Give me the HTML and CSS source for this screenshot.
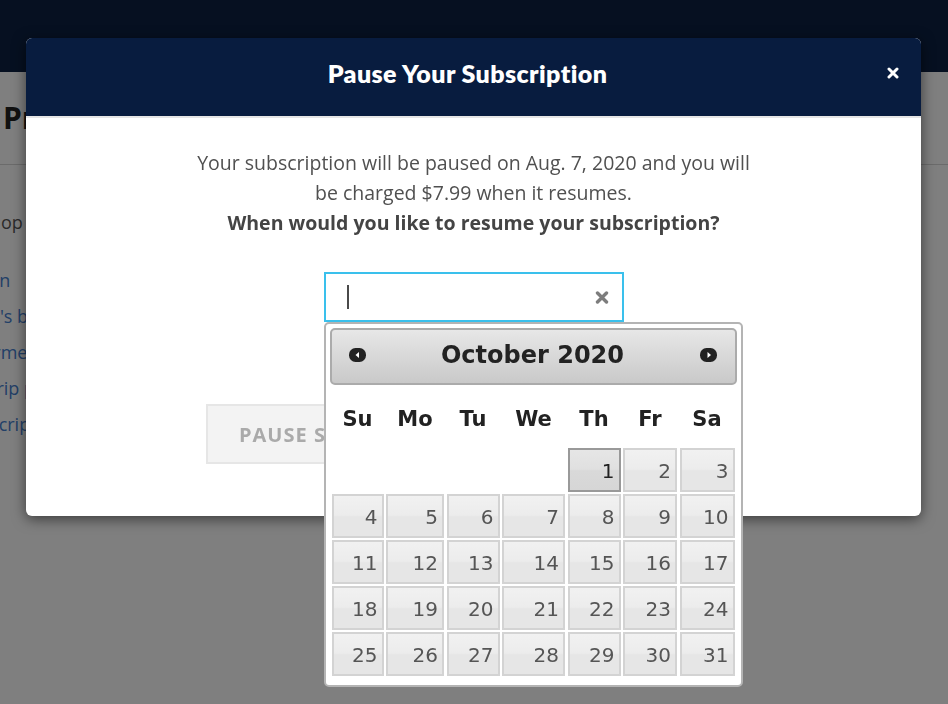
FILE: index.html
```html
<!DOCTYPE html>
<html lang="en">
<head>
<meta charset="utf-8">
<title>Pause Your Subscription</title>
<link rel="stylesheet" href="styles.css">
</head>
<body>
<div class="site">
  <header class="nav"></header>
  <div class="page-head"><h1>Profile</h1></div>
  <main class="page-body">
    <p class="intro">Shop our latest boxes and manage your account options below.</p>
    <ul class="links">
      <li><a href="#">Plan</a></li>
      <li><a href="#">Let's box it up</a></li>
      <li><a href="#">Farmers market</a></li>
      <li><a href="#">A trip planner</a></li>
      <li><a href="#">Inscriptions</a></li>
    </ul>
  </main>
</div>

<div class="overlay"></div>

<div class="modal">
  <div class="modal-header">
    <h2>Pause Your Subscription</h2>
    <button class="close" type="button" aria-label="Close">
      <svg width="12" height="12" viewBox="0 0 12 12"><path d="M2 2L10 10M10 2L2 10" stroke="#fff" stroke-width="3" stroke-linecap="round"/></svg>
    </button>
  </div>
  <div class="modal-body">
    <p>Your subscription will be paused on Aug. 7, 2020 and you will<br>be charged $7.99 when it resumes.<br><strong>When would you like to resume your subscription?</strong></p>

    <div class="date-field">
      <div class="date-input">
        <span class="caret"></span>
        <svg class="clear" width="14" height="13" viewBox="0 0 14 13"><path d="M2.5 2L11.5 11M11.5 2L2.5 11" stroke="#7d7d7d" stroke-width="3.4" stroke-linecap="round"/></svg>
      </div>

      <div class="datepicker">
        <div class="dp-header">
          <a class="dp-nav prev" href="#" aria-label="Prev">
            <svg width="17" height="14" viewBox="0 0 17 14"><rect width="17" height="14" rx="6.5" fill="#222"/><path d="M10 4L10 10L6.5 7Z" fill="#fff"/></svg>
          </a>
          <span class="dp-title">October 2020</span>
          <a class="dp-nav next" href="#" aria-label="Next">
            <svg width="17" height="14" viewBox="0 0 17 14"><rect width="17" height="14" rx="6.5" fill="#222"/><path d="M7.5 4L7.5 10L11 7Z" fill="#fff"/></svg>
          </a>
        </div>
        <div class="dp-grid">
          <span class="dow">Su</span><span class="dow">Mo</span><span class="dow">Tu</span><span class="dow">We</span><span class="dow">Th</span><span class="dow">Fr</span><span class="dow">Sa</span>
          <a class="day today first" href="#">1</a><a class="day" href="#">2</a><a class="day" href="#">3</a>
          <a class="day" href="#">4</a><a class="day" href="#">5</a><a class="day" href="#">6</a><a class="day" href="#">7</a><a class="day" href="#">8</a><a class="day" href="#">9</a><a class="day" href="#">10</a>
          <a class="day" href="#">11</a><a class="day" href="#">12</a><a class="day" href="#">13</a><a class="day" href="#">14</a><a class="day" href="#">15</a><a class="day" href="#">16</a><a class="day" href="#">17</a>
          <a class="day" href="#">18</a><a class="day" href="#">19</a><a class="day" href="#">20</a><a class="day" href="#">21</a><a class="day" href="#">22</a><a class="day" href="#">23</a><a class="day" href="#">24</a>
          <a class="day" href="#">25</a><a class="day" href="#">26</a><a class="day" href="#">27</a><a class="day" href="#">28</a><a class="day" href="#">29</a><a class="day" href="#">30</a><a class="day" href="#">31</a>
        </div>
      </div>
    </div>

    <div class="actions">
      <button class="btn" type="button">Pause Subscription</button>
      <button class="btn" type="button">Cancel</button>
    </div>
  </div>
</div>
</body>
</html>
```
FILE: styles.css
```css
* { box-sizing: border-box; }
html, body { margin: 0; padding: 0; }
body {
  font-family: "Open Sans", "Liberation Sans", sans-serif;
  background: #fff;
  width: 948px;
  height: 704px;
  overflow: hidden;
  position: relative;
}

/* background page */
.nav { height: 72px; background: #0c2042; }
.page-head {
  height: 93px;
  border-bottom: 1px solid #d6d6d6;
  display: flex;
  align-items: center;
  padding-left: 3px;
}
.page-head h1 { margin: 0; font-size: 30px; font-weight: 700; color: #222; line-height: 1; }
.page-body { padding-top: 39px; }
.intro {
  margin: 0 0 22px -20px;
  font-size: 18px;
  line-height: 36px;
  color: #555;
  white-space: nowrap;
}
.links { list-style: none; margin: 0 0 0 -26px; padding: 0; }
.links li { font-size: 18px; line-height: 36px; white-space: nowrap; }
.links a { color: #4580cf; text-decoration: none; }

.overlay { position: fixed; inset: 0; background: rgba(0, 0, 0, 0.5); }

/* modal */
.modal {
  position: absolute;
  left: 26px;
  top: 38px;
  width: 895px;
  background: #fff;
  border-radius: 6px;
  box-shadow: 0 3px 14px rgba(0, 0, 0, 0.55);
}
.modal-header {
  height: 80px;
  background: #081c3f;
  border-bottom: 2px solid #e5e5e5;
  border-radius: 6px 6px 0 0;
  display: grid;
  grid-template-columns: 1fr auto;
  align-items: center;
  padding: 0 22px 8px 22px;
}
.modal-header h2 {
  margin: 0;
  font-family: Lato, "Open Sans", sans-serif;
  font-weight: 800;
  font-size: 25px;
  letter-spacing: 0.4px;
  line-height: 1.2;
  color: #fff;
  text-align: center;
}
.close {
  width: 12px;
  height: 12px;
  padding: 0;
  border: 0;
  background: none;
  display: block;
}
.close svg { display: block; }

.modal-body { padding: 30px 0 52px; text-align: center; }
.modal-body p { margin: 0; font-size: 19.5px; line-height: 30px; color: #505050; }
.modal-body strong { font-weight: 700; color: #444; }

.date-field { position: relative; width: 300px; margin: 34px auto 0; }
.date-input {
  height: 50px;
  border: 2px solid #3ac0ec;
  background: #fff;
  display: flex;
  align-items: center;
  justify-content: space-between;
  padding: 0 13px 0 21px;
}
.caret { width: 2px; height: 24px; background: #4a4a4a; }
.clear { display: block; }

.actions {
  margin-top: 82px;
  display: flex;
  gap: 20px;
  padding-left: 180px;
}
.btn {
  height: 60px;
  padding: 0 31px;
  background: #f3f3f3;
  border: 2px solid #e6e6e6;
  font-family: "Open Sans", sans-serif;
  font-weight: 700;
  font-size: 20px;
  letter-spacing: 1px;
  color: #aaa;
  text-transform: uppercase;
}

/* datepicker */
.datepicker {
  position: absolute;
  top: 50px;
  left: 0;
  width: 419px;
  padding: 4px 4px 9px;
  background: #fff;
  border: 2px solid #b4b4b4;
  border-radius: 5px;
  font-family: "DejaVu Sans", Verdana, sans-serif;
  z-index: 5;
  text-align: left;
}
.dp-header {
  height: 57px;
  border: 2px solid #ababab;
  border-radius: 5px;
  background: linear-gradient(#e7e7e7, #c9c9c9);
  display: grid;
  grid-template-columns: 1fr auto 1fr;
  align-items: center;
  padding: 0 18px 3px 17px;
}
.dp-nav { display: block; width: 17px; height: 14px; }
.dp-nav svg { display: block; }
.dp-nav.next { justify-self: end; }
.dp-title { font-weight: 700; font-size: 24px; line-height: 1; color: #222; }

.dp-grid {
  display: grid;
  grid-template-columns: 52px 58px 53px 63px 53px 54px 55px;
  grid-template-rows: 55px;
  grid-auto-rows: 44px;
  column-gap: 2.5px;
  row-gap: 2px;
  margin: 6px 2px 0;
}
.dow {
  display: flex;
  align-items: center;
  justify-content: center;
  font-weight: 700;
  font-size: 21px;
  color: #222;
}
.day {
  display: flex;
  align-items: center;
  justify-content: flex-end;
  padding: 2px 4px 0 0;
  border: 2px solid #d3d3d3;
  background: linear-gradient(#f1f1f1 0%, #ececec 48%, #e6e6e6 52%, #e6e6e6 100%);
  color: #555;
  font-size: 20px;
  text-decoration: none;
}
.day.first { grid-column-start: 5; }
.day.today {
  border-color: #999;
  background: linear-gradient(#e6e6e6 0%, #e0e0e0 48%, #d9d9d9 52%, #d6d6d6 100%);
  color: #212121;
}
```
